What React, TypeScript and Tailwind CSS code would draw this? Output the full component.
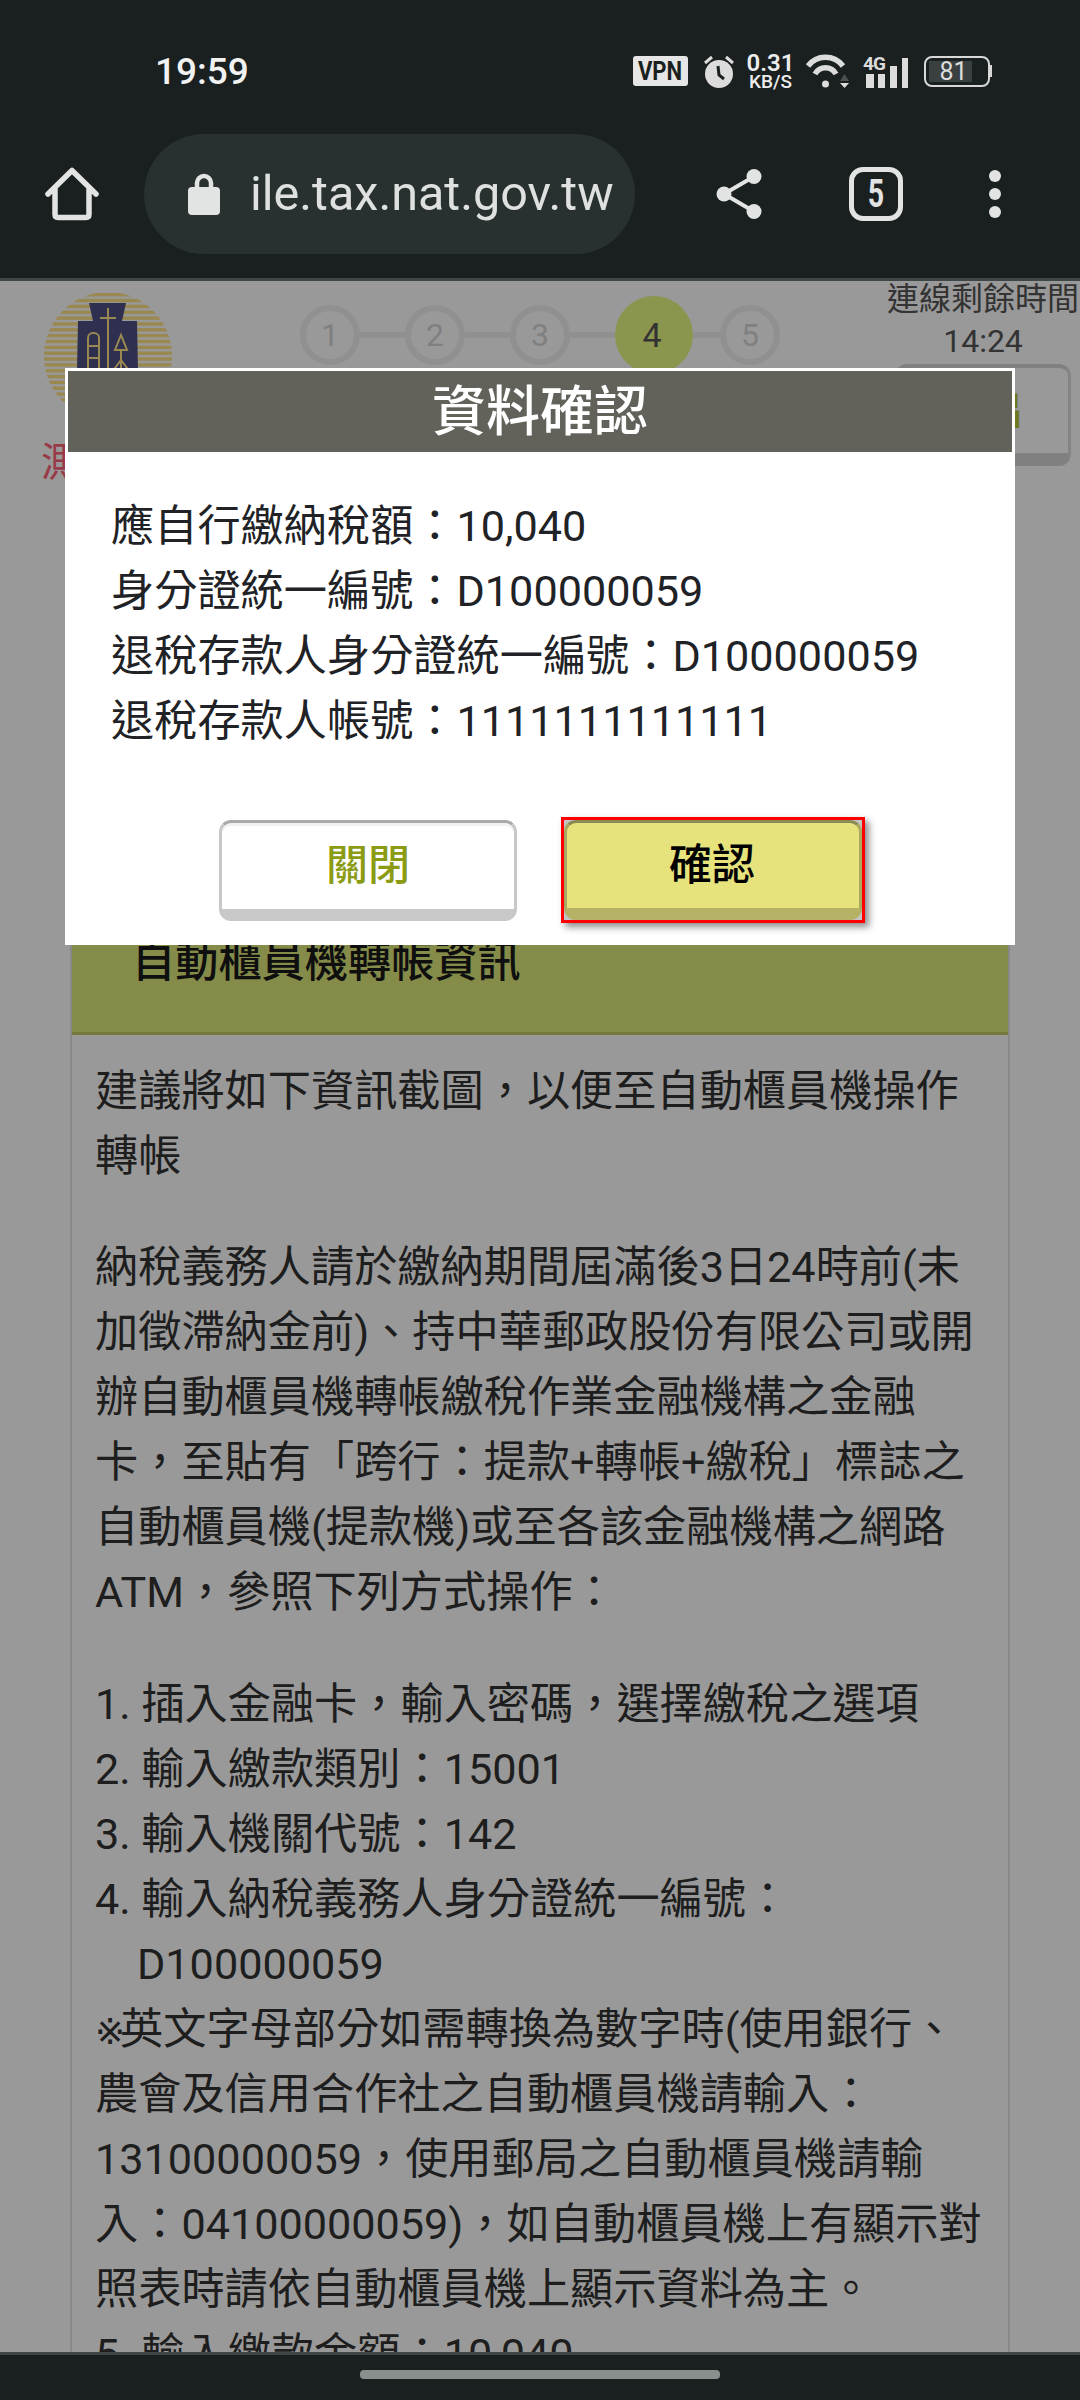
const ICON = "#e2e4e3";

const firstLines = ["建議將如下資訊截圖，以便至自動櫃員機操作", "轉帳"];

const introLines = [
  "納稅義務人請於繳納期間屆滿後3日24時前(未",
  "加徵滯納金前)、持中華郵政股份有限公司或開",
  "辦自動櫃員機轉帳繳稅作業金融機構之金融",
  "卡，至貼有「跨行：提款+轉帳+繳稅」標誌之",
  "自動櫃員機(提款機)或至各該金融機構之網路",
  "ATM，參照下列方式操作：",
];

const confirmLines = [
  "應自行繳納稅額：10,040",
  "身分證統一編號：D100000059",
  "退稅存款人身分證統一編號：D100000059",
  "退稅存款人帳號：1111111111111",
];

const noteLines = [
  "農會及信用合作社之自動櫃員機請輸入：",
  "13100000059，使用郵局之自動櫃員機請輸",
  "入：04100000059)，如自動櫃員機上有顯示對",
  "照表時請依自動櫃員機上顯示資料為主。",
];

const Lines = ({ lines }: { lines: string[] }) => (
  <>
    {lines.map((line) => (
      <div key={line}>{line}</div>
    ))}
  </>
);

const StatusBar = () => (
  <div className="flex h-[134px] items-center pl-[155px] pr-[88px] pt-[8px]">
    <div className="text-[37px] font-medium leading-none text-[#f1f2f2]">19:59</div>
    <div className="ml-auto flex items-center">
      <div className="flex h-[30px] w-[55px] items-center justify-center rounded-[3px] bg-[#e6e6e6] leading-none text-[#1a1f20]">
        <span className="scale-x-[0.85] text-[26px] font-bold">VPN</span>
      </div>
      <svg className="ml-[15px]" width="32" height="33" viewBox="0 0 32 33">
        <circle cx="16" cy="19" r="14" fill="#dcdcdc" />
        <path d="M2 8 L9 2 M30 8 L23 2" stroke="#dcdcdc" strokeWidth="3" fill="none" />
        <path d="M15 11 L16 20 L21 24" stroke="#1a1f20" strokeWidth="3" fill="none" />
      </svg>
      <div className="ml-[13px] flex w-[45px] flex-col items-center text-[#ececec]">
        <span className="text-[24px] font-semibold leading-[20px]">0.31</span>
        <span className="text-[19px] font-medium leading-[17px]">KB/S</span>
      </div>
      <svg className="ml-[12px]" width="44" height="34" viewBox="0 0 44 34">
        <path d="M3 12 A22 22 0 0 1 38 12" stroke="#dcdcdc" strokeWidth="5.5" fill="none" />
        <path d="M10 20 A12 12 0 0 1 31 20" stroke="#dcdcdc" strokeWidth="5.5" fill="none" />
        <circle cx="20.5" cy="30" r="3.5" fill="#dcdcdc" />
        <path d="M35 27 L39.5 20 L44 27 Z" fill="#4c5051" />
        <path d="M35 29 L44 29 L39.5 34 Z" fill="#dcdcdc" />
      </svg>
      <div className="ml-[14px] flex items-end gap-[5px]">
        <div className="flex flex-col items-start">
          <span className="text-[19px] font-bold leading-[18px] text-[#dcdcdc] tracking-[-1px]">4G</span>
          <div className="mt-[1px] flex items-end gap-[4px] pl-[3px]">
            <div className="h-[14px] w-[8px] bg-[#dcdcdc]" />
            <div className="h-[14px] w-[7px] bg-[#dcdcdc]" />
          </div>
        </div>
        <div className="h-[22px] w-[7px] bg-[#dcdcdc]" />
        <div className="h-[30px] w-[6px] bg-[#dcdcdc]" />
      </div>
      <div className="ml-[16px] flex items-center">
        <div className="flex h-[31px] w-[66px] items-center rounded-[8px] border-2 border-[#d8d8d8] pl-[3px]">
          <div className="flex h-[21px] w-[43px] items-center justify-center bg-[#3a3f40] pl-[6px] text-[25px] leading-none text-[#dcdcdc]">
            81
          </div>
        </div>
        <div className="h-[12px] w-[2px] bg-[#d8d8d8]" />
      </div>
    </div>
  </div>
);

const Toolbar = () => (
  <div className="flex h-[120px] items-center pl-[45px]">
    <svg width="54" height="54" viewBox="0 0 54 54" fill="none" stroke={ICON} strokeWidth="5.5" strokeLinecap="round" strokeLinejoin="round">
      <path d="M3 27 L27 3.5 L51 27 M10 22 V47 Q10 50.5 13 50.5 H41 Q44 50.5 44 47 V22" />
    </svg>
    <div className="ml-[45px] flex h-[120px] w-[491px] items-center rounded-[60px] bg-[#283030] pl-[44px]">
      <svg width="32" height="42" viewBox="0 0 32 42">
        <rect y="14" width="32" height="28" rx="4" fill={ICON} />
        <path d="M9 15 V10 A7 7 0 0 1 23 10 V15" stroke={ICON} strokeWidth="4.5" fill="none" />
      </svg>
      <span className="ml-[30px] whitespace-nowrap text-[48.5px] leading-none text-[#dfe1e0]">ile.tax.nat.gov.tw</span>
    </div>
    <svg className="ml-[81px]" width="46" height="50" viewBox="0 0 46 50" fill={ICON}>
      <path d="M38 7.5 L8 25 L38 42.5" stroke={ICON} strokeWidth="4" fill="none" />
      <circle cx="38" cy="7.5" r="7.5" />
      <circle cx="8" cy="25" r="7.5" />
      <circle cx="38" cy="42.5" r="7.5" />
    </svg>
    <div className="ml-[87px] flex h-[54px] w-[54px] items-center justify-center rounded-[14px] border-[5px] border-[#e2e4e3]">
      <span className="scale-x-75 text-[38px] font-bold leading-none text-[#e2e4e3]">5</span>
    </div>
    <div className="ml-[86px] flex flex-col gap-[6px]">
      <div className="h-[12px] w-[12px] rounded-full bg-[#e2e4e3]" />
      <div className="h-[12px] w-[12px] rounded-full bg-[#e2e4e3]" />
      <div className="h-[12px] w-[12px] rounded-full bg-[#e2e4e3]" />
    </div>
  </div>
);

const Logo = () => (
  <svg width="128" height="128" viewBox="0 0 128 128" className="ml-[3px]">
    <defs>
      <clipPath id="disc">
        <circle cx="64" cy="64" r="64" />
      </clipPath>
    </defs>
    <g clipPath="url(#disc)">
      {Array.from({ length: 22 }).map((_, i) => (
        <rect key={i} x="0" y={1 + i * 5.85} width="128" height="3.4" fill="#ffe385" />
      ))}
    </g>
    <path d="M45 11 H82 L78 29 H93 L95 128 H32 L34 29 H49 Z" fill="#4f5085" />
    <g stroke="#ffe385" strokeWidth="2" fill="none">
      <path d="M64 16 V128 M56 26 H72" />
      <rect x="44" y="41" width="11" height="40" rx="5" />
      <path d="M44 54 H55 M44 66 H55" />
      <path d="M77 43 L71 58 H83 Z M77 58 V90 M77 68 L68 80 M77 68 L86 80" />
    </g>
  </svg>
);

const Step = ({ n, active = false }: { n: number; active?: boolean }) =>
  active ? (
    <div className="flex h-[78px] w-[78px] items-center justify-center rounded-full bg-[#e6fa80] pr-[4px] text-[34px] text-[#555]">
      {n}
    </div>
  ) : (
    <div className="flex h-[60px] w-[60px] items-center justify-center rounded-full border-[6px] border-[#f0f0f0] text-[32px] text-[#d6d6d6]">
      {n}
    </div>
  );

const Link = ({ w }: { w: string }) => <div className={`h-[6px] bg-[#f0f0f0] ${w}`} />;

const PageHeader = () => (
  <div className="flex h-[620px]">
    <div className="w-[300px] pl-[41px] pt-[11px]">
      <Logo />
      <div className="mt-[23px] whitespace-nowrap text-[40px] leading-[40px] text-[#ff6178]">測試環境</div>
    </div>
    <div className="flex h-[78px] items-center mt-[15px]">
      <Step n={1} />
      <Link w="w-[45px]" />
      <Step n={2} />
      <Link w="w-[45px]" />
      <Step n={3} />
      <Link w="w-[45px]" />
      <Step n={4} active />
      <Link w="w-[27px]" />
      <Step n={5} />
    </div>
    <div className="ml-auto flex w-[194px] flex-col items-center text-[32px] leading-[36px] text-[#555]">
      <div className="whitespace-nowrap">連線剩餘時間</div>
      <div className="mt-[6px]">14:24</div>
      <div className="mt-[5px] flex h-[102px] w-[176px] items-center justify-center rounded-[12px] border-x-[3px] border-t-[4px] border-b-[13px] border-x-[#dcdcdc] border-t-[#d5d5d5] border-b-[#d5d5d5] text-[40px] font-medium text-[#bac833]">
        登出
      </div>
    </div>
  </div>
);

const Panel = () => (
  <div className="mx-[70px] border-x-[2px] border-[#e3e3e3]">
    <div className="h-[134px] border-b-[3px] border-[#c3ca69] bg-[#dee97b] pl-[60px] pt-[29px] font-medium text-[#1a1a1a]">
      自動櫃員機轉帳資訊
    </div>
    <div className="px-[23px] pt-[24px] text-[#333]">
      <Lines lines={firstLines} />
      <div className="mt-[46px]">
        <Lines lines={introLines} />
      </div>
      <div className="mt-[47px]">
        <div>1. 插入金融卡，輸入密碼，選擇繳稅之選項</div>
        <div>2. 輸入繳款類別：15001</div>
        <div>3. 輸入機關代號：142</div>
        <div>4. 輸入納稅義務人身分證統一編號：</div>
        <div className="pl-[42px]">D100000059</div>
        <div className="h-[65px]">
          <span className="inline-block w-[25px] font-['DejaVu_Sans',sans-serif] text-[36px] leading-none">※</span>
          英文字母部分如需轉換為數字時(使用銀行、
        </div>
        <Lines lines={noteLines} />
        <div>5. 輸入繳款金額：10,040</div>
      </div>
    </div>
  </div>
);

const ConfirmDialog = () => (
  <div className="absolute left-[65px] top-[87px] w-[950px] bg-white pb-[22px] text-[#212226]">
    <div className="mx-[3px] mt-[3px] flex h-[81px] items-center justify-center bg-[#62625b] pt-[2px] text-[54px] font-medium leading-none text-white">
      資料確認
    </div>
    <div className="mt-[42px] pl-[46px]">
      <Lines lines={confirmLines} />
    </div>
    <div className="mt-[63px] flex items-center pl-[154px]">
      <button className="flex h-[101px] w-[298px] items-center justify-center rounded-[12px] border-x-[3px] border-t-[3px] border-b-[12px] border-x-[#c8c8c8] border-t-[#aaaaaa] border-b-[#c8c8c8] bg-white text-[42px] font-medium text-[#8b9c14] shadow-[inset_0_3px_0_#f2f2f2]">
        關閉
      </button>
      <div className="ml-[44px] h-[106px] w-[304px] border-[3px] border-[#ff0000] bg-[#c4c4c4] shadow-[4px_4px_7px_rgba(0,0,0,0.45)]">
        <button className="flex h-full w-full items-center justify-center rounded-[12px] border-x-[3px] border-t-[3px] border-b-[12px] border-x-[#aaa860] border-t-[#8c8a54] border-b-[#b5b266] bg-[#e6e37d] pr-[2px] text-[43px] font-medium text-black">
          確認
        </button>
      </div>
    </div>
  </div>
);

const App = () => {
  return (
    <div className="flex h-[2400px] w-[1080px] flex-col overflow-hidden bg-[#1a1f20] font-['Roboto','Noto_Sans_CJK_TC',sans-serif] text-[43.2px] leading-[65px]">
      <div className="h-[278px]">
        <StatusBar />
        <Toolbar />
      </div>
      <div className="relative flex-1 overflow-hidden border-t-[3px] border-[#3e4745]">
        <div className="h-full bg-white whitespace-nowrap">
          <PageHeader />
          <Panel />
        </div>
        <div className="absolute inset-0 bg-black/40" />
        <ConfirmDialog />
      </div>
      <div className="flex h-[48px] items-center justify-center border-t-[3px] border-[#3e4745] pb-[6px]">
        <div className="h-[9px] w-[360px] rounded-[4px] bg-[#8a8e8c]" />
      </div>
    </div>
  );
};

export default App;
